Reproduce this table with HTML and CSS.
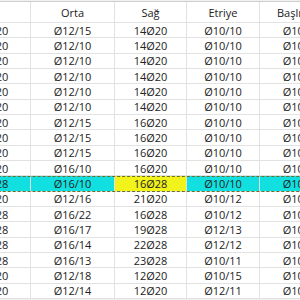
FILE: index.html
```html
<!DOCTYPE html>
<html>
<head>
<meta charset="utf-8">
<link rel="stylesheet" href="styles.css">
</head>
<body>
<div class="view">
  <div class="grid">
    <div class="row head">
      <div class="cell">Sol</div><div class="cell">Orta</div><div class="cell">Sağ</div><div class="cell">Etriye</div><div class="cell">Başlık</div>
    </div>
    <div class="row"><div class="cell">14Ø20</div><div class="cell">Ø12/15</div><div class="cell">14Ø20</div><div class="cell">Ø10/10</div><div class="cell">Ø10/10</div></div>
    <div class="row"><div class="cell">14Ø20</div><div class="cell">Ø12/10</div><div class="cell">14Ø20</div><div class="cell">Ø10/10</div><div class="cell">Ø10/10</div></div>
    <div class="row"><div class="cell">14Ø20</div><div class="cell">Ø12/10</div><div class="cell">14Ø20</div><div class="cell">Ø10/10</div><div class="cell">Ø10/10</div></div>
    <div class="row"><div class="cell">14Ø20</div><div class="cell">Ø12/10</div><div class="cell">14Ø20</div><div class="cell">Ø10/10</div><div class="cell">Ø10/10</div></div>
    <div class="row"><div class="cell">14Ø20</div><div class="cell">Ø12/10</div><div class="cell">14Ø20</div><div class="cell">Ø10/10</div><div class="cell">Ø10/10</div></div>
    <div class="row"><div class="cell">14Ø20</div><div class="cell">Ø12/10</div><div class="cell">14Ø20</div><div class="cell">Ø10/10</div><div class="cell">Ø10/10</div></div>
    <div class="row"><div class="cell">16Ø20</div><div class="cell">Ø12/15</div><div class="cell">16Ø20</div><div class="cell">Ø10/10</div><div class="cell">Ø10/10</div></div>
    <div class="row"><div class="cell">16Ø20</div><div class="cell">Ø12/15</div><div class="cell">16Ø20</div><div class="cell">Ø10/10</div><div class="cell">Ø10/10</div></div>
    <div class="row"><div class="cell">16Ø20</div><div class="cell">Ø12/15</div><div class="cell">16Ø20</div><div class="cell">Ø10/10</div><div class="cell">Ø10/10</div></div>
    <div class="row"><div class="cell">16Ø20</div><div class="cell">Ø16/10</div><div class="cell">16Ø20</div><div class="cell">Ø10/10</div><div class="cell">Ø10/10</div></div>
    <div class="row sel"><div class="cell">16Ø28</div><div class="cell">Ø16/10</div><div class="cell hl">16Ø28</div><div class="cell">Ø10/10</div><div class="cell">Ø10/10</div></div>
    <div class="row"><div class="cell">21Ø20</div><div class="cell">Ø12/16</div><div class="cell">21Ø20</div><div class="cell">Ø10/12</div><div class="cell">Ø10/12</div></div>
    <div class="row"><div class="cell">16Ø28</div><div class="cell">Ø16/22</div><div class="cell">16Ø28</div><div class="cell">Ø10/12</div><div class="cell">Ø10/12</div></div>
    <div class="row"><div class="cell">19Ø28</div><div class="cell">Ø16/17</div><div class="cell">19Ø28</div><div class="cell">Ø12/13</div><div class="cell">Ø10/13</div></div>
    <div class="row"><div class="cell">22Ø28</div><div class="cell">Ø16/14</div><div class="cell">22Ø28</div><div class="cell">Ø12/12</div><div class="cell">Ø10/12</div></div>
    <div class="row"><div class="cell">23Ø28</div><div class="cell">Ø16/13</div><div class="cell">23Ø28</div><div class="cell">Ø10/11</div><div class="cell">Ø10/11</div></div>
    <div class="row"><div class="cell">12Ø20</div><div class="cell">Ø12/18</div><div class="cell">12Ø20</div><div class="cell">Ø10/15</div><div class="cell">Ø10/15</div></div>
    <div class="row"><div class="cell">12Ø20</div><div class="cell">Ø12/14</div><div class="cell">12Ø20</div><div class="cell">Ø12/11</div><div class="cell">Ø10/11</div></div>
  </div>
</div>
</body>
</html>
```
FILE: styles.css
```css
html, body {
  margin: 0;
  padding: 0;
  background: #ffffff;
}
.view {
  width: 300px;
  height: 300px;
  overflow: hidden;
  padding-top: 1px;
  box-sizing: border-box;
  background: #f0f0f0;
}
.grid {
  margin-left: -47px;
  width: 391px;
  background: #ffffff;
  border-top: 1px solid #cfcfcf;
  font-family: "Open Sans", "Noto Sans", sans-serif;
  font-size: 11px;
  color: #222222;
}
.row {
  display: grid;
  grid-template-columns: 78px 84px 72px 73px 84px;
  height: 15.33px;
  box-sizing: border-box;
  border-bottom: 1px solid #e2e2e2;
}
.row.head {
  height: 21px;
  background: #ffffff;
  border-bottom: 1px solid #e2e2e2;
}
.cell {
  display: flex;
  align-items: center;
  justify-content: center;
  border-right: 1px solid #e2e2e2;
  white-space: nowrap;
  line-height: 1;
}
.row.head .cell:last-child {
  justify-content: flex-start;
  padding-left: 17px;
}
.row.sel {
  background: #12e0e0;
  outline: 1px dashed #6b6b2a;
  outline-offset: -1px;
}
.cell.hl {
  background: #f3f31c;
}
```
